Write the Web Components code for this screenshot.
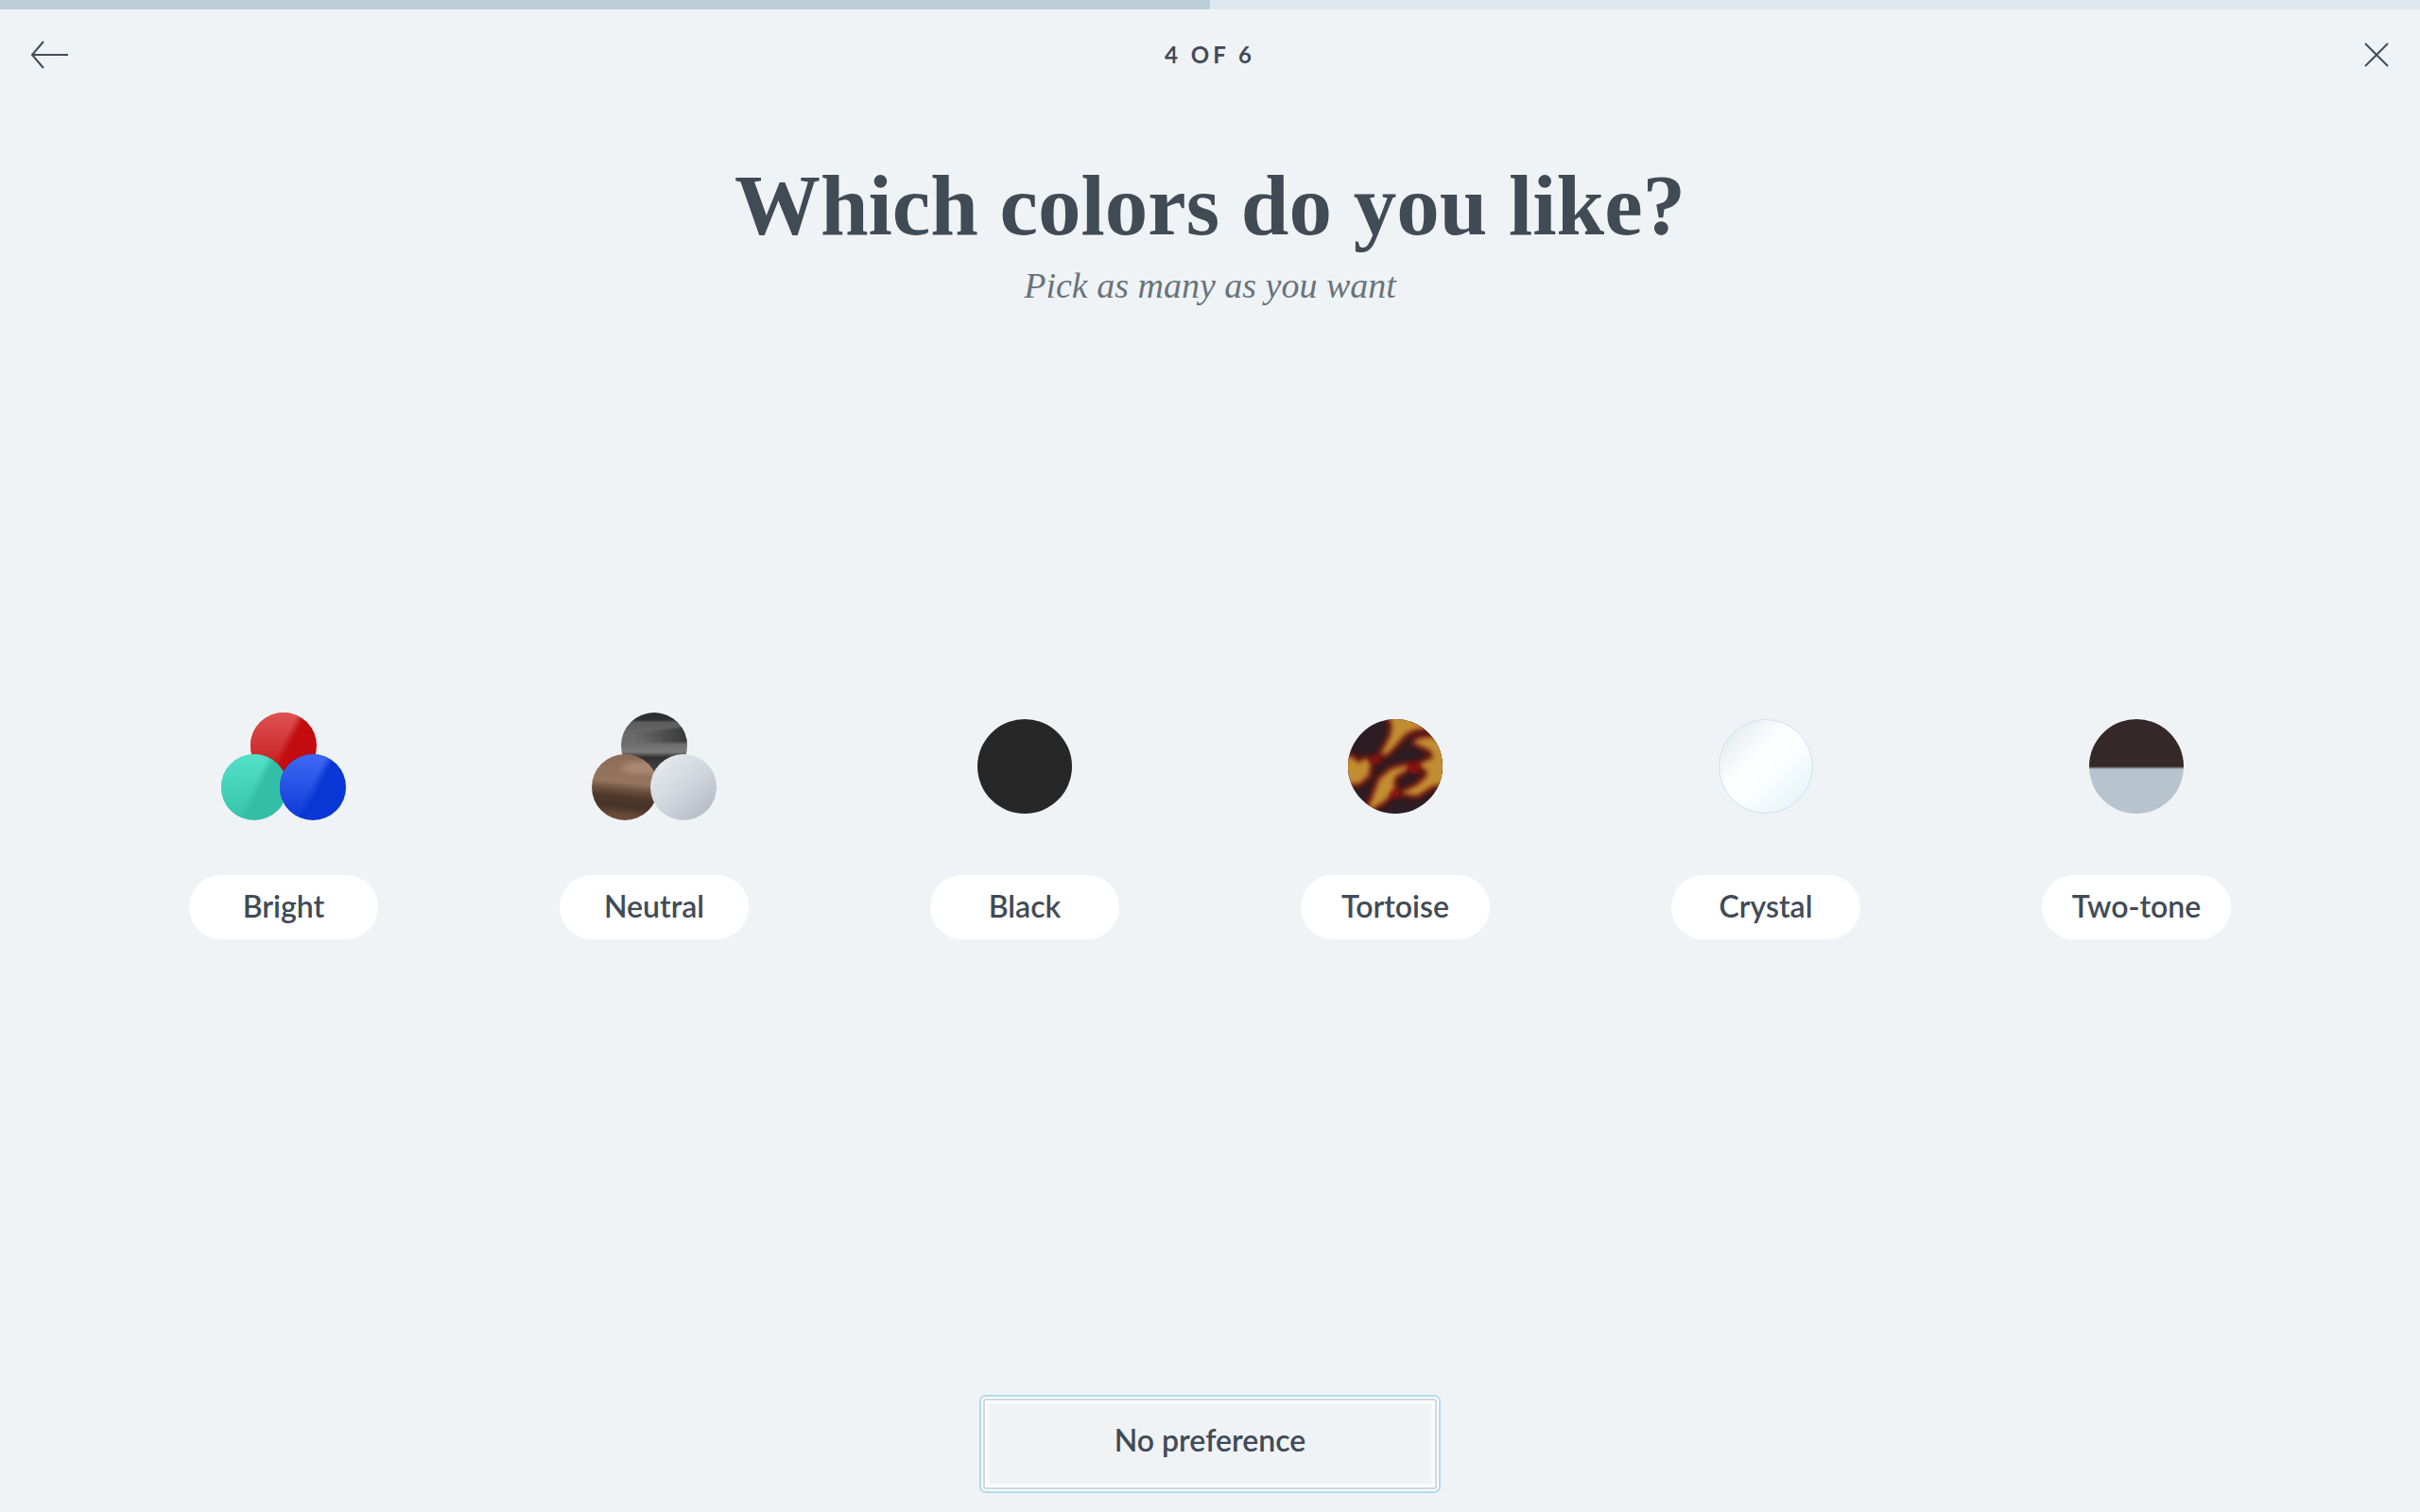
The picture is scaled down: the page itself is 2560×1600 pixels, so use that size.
<!DOCTYPE html>
<html lang="en">
<head>
<meta charset="utf-8">
<meta name="viewport" content="width=device-width, initial-scale=1">
<title>Which colors do you like?</title>
<style>
    body {
        margin: 0;
        background-color: #eff3f6;
        color: #414b56;
        font-family: Lato, "Open Sans", sans-serif;
    }
</style>
</head>
<body>
<quiz-page>
    <quiz-progress slot="top" value="3" max="6"></quiz-progress>
    <quiz-nav slot="top">4 of 6</quiz-nav>
    <quiz-heading slot="heading">
        Which colors do you like?
        <span slot="hint">Pick as many as you want</span>
    </quiz-heading>
    <color-option swatch="bright">Bright</color-option>
    <color-option swatch="neutral">Neutral</color-option>
    <color-option swatch="black">Black</color-option>
    <color-option swatch="tortoise">Tortoise</color-option>
    <color-option swatch="crystal">Crystal</color-option>
    <color-option swatch="twotone">Two-tone</color-option>
    <skip-button slot="bottom">No preference</skip-button>
</quiz-page>

<script>
class QuizPage extends HTMLElement {
    constructor() {
        super();
        this.shadowDOM = this.attachShadow({mode: "open"});
    }

    connectedCallback() {
        this.render();
    }

    render() {
        this.shadowDOM.innerHTML = `
        <style>
        :host {
            display: flex;
            flex-direction: column;
            min-height: 100vh;
        }

        main {
            flex: 1;
            display: flex;
            flex-direction: column;
        }

        .options {
            flex: 1;
            display: grid;
            grid-template-columns: repeat(6, 1fr);
            align-items: center;
            padding: 0 104px 58px;
        }

        footer {
            display: flex;
            justify-content: center;
            padding-bottom: 24px;
        }
        </style>
        <header><slot name="top"></slot></header>
        <main>
            <slot name="heading"></slot>
            <div class="options"><slot></slot></div>
        </main>
        <footer><slot name="bottom"></slot></footer>
        `;
    }
}

class QuizProgress extends HTMLElement {
    constructor() {
        super();
        this.shadowDOM = this.attachShadow({mode: "open"});
    }

    connectedCallback() {
        this.render();
    }

    render() {
        const value = this.getAttribute("value");
        const max = this.getAttribute("max");
        this.shadowDOM.innerHTML = `
        <style>
        :host {
            display: block;
        }

        progress {
            display: block;
            width: 100%;
            height: 10px;
            border: 0;
            appearance: none;
            background-color: #dde9ef;
        }

        progress::-webkit-progress-bar {
            background-color: #dde9ef;
        }

        progress::-webkit-progress-value {
            background-color: #bccfd8;
        }
        </style>
        <progress value="${value}" max="${max}" aria-label="Quiz progress"></progress>
        `;
    }
}

class QuizNav extends HTMLElement {
    constructor() {
        super();
        this.shadowDOM = this.attachShadow({mode: "open"});
    }

    connectedCallback() {
        this.render();
    }

    render() {
        this.shadowDOM.innerHTML = `
        <style>
        :host {
            display: flex;
            align-items: center;
            justify-content: space-between;
            height: 96px;
            padding: 0 32px;
        }

        button {
            display: flex;
            width: 40px;
            padding: 0;
            border: 0;
            background: none;
            color: inherit;
            cursor: pointer;
        }

        .close {
            justify-content: flex-end;
        }

        svg {
            fill: none;
            stroke: currentColor;
            stroke-width: 2;
        }

        .step {
            font-size: 24px;
            font-weight: 700;
            line-height: 32px;
            letter-spacing: 4px;
            text-transform: uppercase;
        }
        </style>
        <button aria-label="Back">
            <svg width="40" height="30" viewBox="0 0 40 30"><path d="M40 15H2M14 1L2 15L14 29"/></svg>
        </button>
        <span class="step"><slot></slot></span>
        <button class="close" aria-label="Close">
            <svg width="28" height="28" viewBox="0 0 28 28"><path d="M2 2L26 26M26 2L2 26"/></svg>
        </button>
        `;
    }
}

class QuizHeading extends HTMLElement {
    constructor() {
        super();
        this.shadowDOM = this.attachShadow({mode: "open"});
    }

    connectedCallback() {
        this.render();
    }

    render() {
        this.shadowDOM.innerHTML = `
        <style>
        :host {
            display: block;
            padding-top: 60px;
            text-align: center;
            font-family: "Liberation Serif", serif;
        }

        h1 {
            margin: 0;
            font-size: 91px;
            line-height: 104px;
        }

        p {
            margin: 8px 0 0;
            color: #6a737b;
            font-size: 38px;
            font-style: italic;
            line-height: 48px;
        }
        </style>
        <h1><slot></slot></h1>
        <p><slot name="hint"></slot></p>
        `;
    }
}

// bright and neutral are three overlapping 70px discs, the others one 100px disc
const swatches = {
    bright: `
        <svg width="132" height="114" viewBox="0 0 132 114">
            <defs>
                <linearGradient id="shineRed" x1="0" y1="0" x2="0" y2="1">
                    <stop offset="0" stop-color="#dd5351"/>
                    <stop offset="1" stop-color="#c41416"/>
                </linearGradient>
                <linearGradient id="shineTeal" x1="0" y1="0" x2="0" y2="1">
                    <stop offset="0" stop-color="#52e0c8"/>
                    <stop offset="1" stop-color="#36c4ac"/>
                </linearGradient>
                <linearGradient id="shineBlue" x1="0" y1="0" x2="0" y2="1">
                    <stop offset="0" stop-color="#3f69f3"/>
                    <stop offset="1" stop-color="#0c39d7"/>
                </linearGradient>
                <linearGradient id="edge" gradientUnits="userSpaceOnUse" x1="33" y1="34" x2="41" y2="38">
                    <stop offset="0" stop-color="#fff"/>
                    <stop offset="1" stop-color="#000"/>
                </linearGradient>
                <mask id="half"><rect width="70" height="70" fill="url(#edge)"/></mask>
            </defs>
            <g transform="translate(31 0)">
                <circle cx="35" cy="35" r="35" fill="#c20c10"/>
                <circle cx="35" cy="35" r="35" fill="url(#shineRed)" mask="url(#half)"/>
            </g>
            <g transform="translate(0 44)">
                <circle cx="35" cy="35" r="35" fill="#33bea7"/>
                <circle cx="35" cy="35" r="35" fill="url(#shineTeal)" mask="url(#half)"/>
            </g>
            <g transform="translate(62 44)">
                <circle cx="35" cy="35" r="35" fill="#0936d4"/>
                <circle cx="35" cy="35" r="35" fill="url(#shineBlue)" mask="url(#half)"/>
            </g>
        </svg>`,
    neutral: `
        <svg width="132" height="114" viewBox="0 0 132 114">
            <defs>
                <linearGradient id="smoke" x1="0" y1="0" x2="0" y2="1">
                    <stop offset="0" stop-color="#2c2c2c"/>
                    <stop offset=".11" stop-color="#303030"/>
                    <stop offset=".15" stop-color="#5c5c5c"/>
                    <stop offset=".3" stop-color="#686868"/>
                    <stop offset=".48" stop-color="#6e6e6e"/>
                    <stop offset=".6" stop-color="#7a7a7a"/>
                    <stop offset=".64" stop-color="#505050"/>
                    <stop offset=".68" stop-color="#303030"/>
                    <stop offset=".8" stop-color="#3c3c3c"/>
                    <stop offset="1" stop-color="#555"/>
                </linearGradient>
                <linearGradient id="smokeDark">
                    <stop offset="0" stop-color="#2e2e2e" stop-opacity="0"/>
                    <stop offset=".9" stop-color="#2e2e2e" stop-opacity=".95"/>
                </linearGradient>
                <linearGradient id="wood" x1=".1" y1="0" x2="0" y2="1">
                    <stop offset="0" stop-color="#8c6d58"/>
                    <stop offset=".38" stop-color="#957560"/>
                    <stop offset=".48" stop-color="#70553f"/>
                    <stop offset=".6" stop-color="#4f392b"/>
                    <stop offset=".74" stop-color="#46322a"/>
                    <stop offset=".88" stop-color="#684936"/>
                    <stop offset="1" stop-color="#74513d"/>
                </linearGradient>
                <linearGradient id="silver" x1=".15" y1=".1" x2=".85" y2=".9">
                    <stop offset="0" stop-color="#e5e8ed"/>
                    <stop offset=".5" stop-color="#d1d6de"/>
                    <stop offset="1" stop-color="#b7bdc9"/>
                </linearGradient>
                <filter id="soft" x="-30%" y="-60%" width="160%" height="220%"><feGaussianBlur stdDeviation="3 1"/></filter>
                <filter id="softer" x="-30%" y="-60%" width="160%" height="220%"><feGaussianBlur stdDeviation="4 2"/></filter>
                <clipPath id="disc"><circle cx="35" cy="35" r="35"/></clipPath>
            </defs>
            <g transform="translate(31 0)" clip-path="url(#disc)">
                <rect width="70" height="70" fill="url(#smoke)"/>
                <path d="M16 22Q46 18 84 13V32H18Z" fill="url(#smokeDark)" filter="url(#soft)"/>
            </g>
            <g transform="translate(0 44)" clip-path="url(#disc)">
                <rect width="70" height="70" fill="url(#wood)"/>
                <path d="M36 9L76 6V22L32 20Z" fill="#a98770" filter="url(#softer)"/>
            </g>
            <circle cx="97" cy="79" r="35" fill="url(#silver)"/>
        </svg>`,
    black: `
        <svg width="100" height="100" viewBox="0 0 100 100"><circle cx="50" cy="50" r="50" fill="#272727"/></svg>`,
    tortoise: `
        <svg width="100" height="100" viewBox="78 63 300 300">
            <defs>
                <clipPath id="shell"><circle cx="228" cy="213" r="150"/></clipPath>
                <filter id="halo" x="-20%" y="-20%" width="140%" height="140%"><feGaussianBlur stdDeviation="9"/></filter>
                <filter id="core" x="-20%" y="-20%" width="140%" height="140%"><feGaussianBlur stdDeviation="8"/></filter>
                <g id="spots">
                    <path d="M210 50L300 50L318 90Q268 88 242 126L202 170L188 172L216 118L222 84Z"/>
                    <path d="M60 184L88 186L112 206L134 192L146 202L140 240L112 264L60 266Z"/>
                    <path d="M292 136Q330 112 390 136V262L344 272L296 302L258 296L300 276L330 248L334 226L308 208L352 188L344 160Z"/>
                    <path d="M144 350L162 306L182 254L218 224L270 212L254 226L228 240L218 266L224 286L190 322Z"/>
                </g>
            </defs>
            <g clip-path="url(#shell)">
                <rect x="78" y="63" width="300" height="300" fill="#2b1d23"/>
                <g fill="#7c1609" stroke="#7c1609" stroke-width="28" stroke-linejoin="round" filter="url(#halo)">
                    <use href="#spots"/>
                    <path d="M164 192L196 168M282 218L310 212M222 300L244 292"/>
                </g>
                <use href="#spots" fill="#c18d31" stroke="#c18d31" stroke-width="6" filter="url(#core)"/>
                <g fill="#8c0a08" filter="url(#core)">
                    <circle cx="164" cy="192" r="14"/>
                    <circle cx="288" cy="218" r="17"/>
                    <circle cx="226" cy="300" r="13"/>
                </g>
            </g>
        </svg>`,
    crystal: `
        <svg width="100" height="100" viewBox="0 0 100 100">
            <defs>
                <linearGradient id="glass" x1=".12" y1=".18" x2=".82" y2=".88">
                    <stop offset="0" stop-color="#e8eff2"/>
                    <stop offset=".38" stop-color="#fff"/>
                    <stop offset=".54" stop-color="#fdffff"/>
                    <stop offset="1" stop-color="#e8f5f9"/>
                </linearGradient>
            </defs>
            <circle cx="50" cy="50" r="49.5" fill="url(#glass)" stroke="#cce1f1"/>
        </svg>`,
    twotone: `
        <svg width="100" height="100" viewBox="0 0 100 100">
            <defs>
                <linearGradient id="tones" x1="0" y1="0" x2="0" y2="1">
                    <stop offset=".5" stop-color="#352828"/>
                    <stop offset=".53" stop-color="#b7c4ce"/>
                </linearGradient>
            </defs>
            <circle cx="50" cy="50" r="50" fill="url(#tones)"/>
        </svg>`
};

class ColorOption extends HTMLElement {
    constructor() {
        super();
        this.shadowDOM = this.attachShadow({mode: "open"});
    }

    connectedCallback() {
        this.render();
        const button = this.shadowDOM.querySelector("button");
        button.addEventListener("click", () => {
            const pressed = button.getAttribute("aria-pressed") === "true";
            button.setAttribute("aria-pressed", String(!pressed));
        });
    }

    render() {
        this.shadowDOM.innerHTML = `
        <style>
        :host {
            display: flex;
            justify-content: center;
        }

        button {
            display: flex;
            flex-direction: column;
            align-items: center;
            gap: 58px;
            padding: 0;
            border: 0;
            background: none;
            color: inherit;
            font: inherit;
            cursor: pointer;
        }

        .swatch {
            display: flex;
            align-items: center;
            height: 114px;
        }

        .label {
            box-sizing: border-box;
            min-width: 200px;
            padding: 15px 24px 17px;
            border-radius: 34px;
            background-color: #fff;
            font-size: 32px;
            font-weight: 600;
            line-height: 36px;
        }

        button[aria-pressed="true"] .label {
            background-color: #bccfd8;
        }
        </style>
        <button aria-pressed="false">
            <span class="swatch">${swatches[this.getAttribute("swatch")]}</span>
            <span class="label"><slot></slot></span>
        </button>
        `;
    }
}

class SkipButton extends HTMLElement {
    constructor() {
        super();
        this.shadowDOM = this.attachShadow({mode: "open"});
    }

    connectedCallback() {
        this.render();
    }

    render() {
        this.shadowDOM.innerHTML = `
        <style>
        :host {
            display: block;
        }

        button {
            display: block;
            min-width: 480px;
            padding: 24px 32px 32px;
            border: 2px solid #d0d8db;
            border-radius: 3px;
            background-color: #eff3f6;
            box-shadow: inset 0 0 0 2px #fff, inset 0 0 0 4px #fafafa, 0 0 0 2px #fff, 0 0 0 4px #afdcee;
            color: inherit;
            font: inherit;
            font-size: 32px;
            font-weight: 600;
            line-height: 36px;
            cursor: pointer;
        }
        </style>
        <button><slot></slot></button>
        `;
    }
}

customElements.define("quiz-page", QuizPage);
customElements.define("quiz-progress", QuizProgress);
customElements.define("quiz-nav", QuizNav);
customElements.define("quiz-heading", QuizHeading);
customElements.define("color-option", ColorOption);
customElements.define("skip-button", SkipButton);
</script>
</body>
</html>
